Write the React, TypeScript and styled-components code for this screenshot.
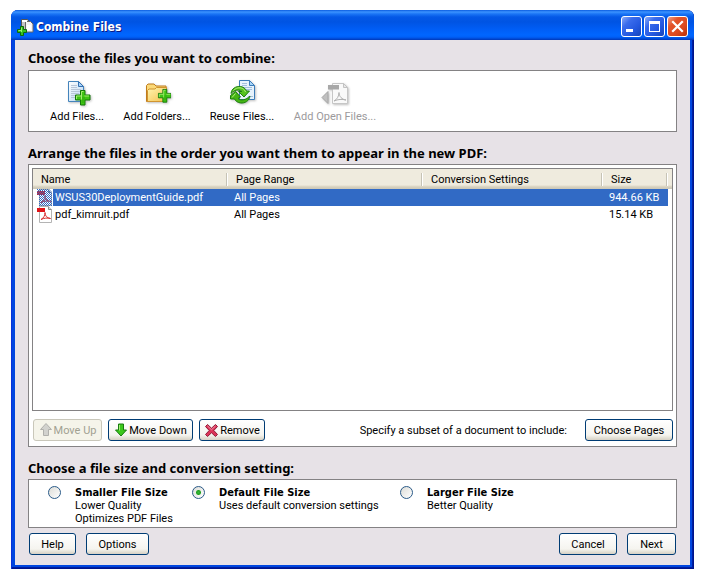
import React, { useState } from 'react';
import styled, { createGlobalStyle } from 'styled-components';

const UI_FONT = 'Roboto, "Liberation Sans", sans-serif';
const BOLD_FONT = '"DejaVu Sans Condensed", "DejaVu Sans", sans-serif';
const HEADING_FONT = '"Noto Sans", "Open Sans", sans-serif';

const GlobalStyle = createGlobalStyle`
  * { box-sizing: border-box; }
  body {
    margin: 0;
    background: #fff;
    color: #000;
    font: 11px/13px ${UI_FONT};
  }
  button, input { font: inherit; color: inherit; }
`;

const Page = styled.div`
  display: flex;
  min-height: 100vh;
  padding: 10px 11px 8px;
`;

const Window = styled.main`
  flex: 1;
  min-width: 0;
  display: flex;
  flex-direction: column;
  border-radius: 7px 7px 0 0;
  background: #0046e0;
  box-shadow: inset 1px 0 #0831d9, inset -1px -1px #00138c, inset -2px -2px #001ea0;
  overflow: hidden;
`;

const TitleBar = styled.header`
  height: 30px;
  flex: none;
  display: flex;
  align-items: center;
  gap: 2px;
  padding: 3px 6px 0 6px;
  background: linear-gradient(
    #0a5ce0 0, #3c93ff 2px, #1a74f5 4px, #0458e6 7px, #0054e3 12px,
    #005df5 19px, #0066ff 25px, #0060f8 27px, #0046d0 29px, #0036b4 30px
  );
`;

const Title = styled.h1`
  flex: 1;
  margin: 0;
  font: bold 12px/16px ${BOLD_FONT};
  color: #fff;
  text-shadow: 1px 1px #0a1883;
`;

const CaptionButton = styled.button<{ $danger?: boolean }>`
  width: 21px;
  height: 21px;
  padding: 0;
  display: grid;
  place-items: center;
  border: 1px solid #fff;
  border-radius: 3px;
  background: ${(p) =>
    p.$danger
      ? 'linear-gradient(135deg, #f0a088 0, #e3532a 30%, #dc4a20 65%, #b83008 100%)'
      : 'linear-gradient(135deg, #8aaaf8 0, #3a6cec 30%, #2458e0 65%, #1644b8 100%)'};
`;

const Content = styled.div`
  flex: 1;
  display: flex;
  flex-direction: column;
  margin: 0 4px 4px;
  padding: 9px 13px 10px;
  background: #e7e2e7;
`;

const Heading = styled.h2`
  margin: 0;
  font: bold 13px/18px ${HEADING_FONT};
`;

const Panel = styled.section`
  border: 1px solid #848284;
  background: #fff;
`;

const Toolbar = styled(Panel)`
  height: 62px;
  margin: 3px 0 12px;
  padding: 8px 12px 0 11px;
  display: flex;
  align-items: flex-start;
`;

const ToolButton = styled.button<{ $width: number }>`
  width: ${(p) => p.$width}px;
  padding: 0;
  display: flex;
  flex-direction: column;
  align-items: center;
  gap: 3px;
  border: 0;
  background: none;
  white-space: nowrap;
  svg { filter: drop-shadow(1px 1px 1px rgb(0 0 0 / 25%)); }
  &:disabled { color: #9c9a9c; }
`;

const FilePanel = styled(Panel)`
  flex: 1;
  display: flex;
  flex-direction: column;
  margin: 2px 0 12px;
  padding: 3px 3px 5px;
`;

const FileList = styled.div`
  flex: 1;
  border: 1px solid #848284;
`;

const Table = styled.table`
  width: 100%;
  table-layout: fixed;
  border-collapse: separate;
  border-spacing: 0;
`;

const Col = styled.col<{ $width?: string }>`
  width: ${(p) => p.$width ?? 'auto'};
`;

const HeaderCell = styled.th`
  height: 20px;
  padding: 0 0 0 8px;
  font-weight: normal;
  text-align: left;
  background:
    linear-gradient(90deg, #c6c3b5 1px, #fff 1px) right 4px / 2px 13px no-repeat,
    linear-gradient(#efebde 16px, #e2dccb 17px, #d6d0be 18px, #cbc7b8 20px);
  &:last-child { background: linear-gradient(#efebde 16px, #e2dccb 17px, #d6d0be 18px, #cbc7b8 20px); }
`;

const Row = styled.tr<{ $selected: boolean }>`
  color: ${(p) => (p.$selected ? '#fff' : '#000')};
  --row: ${(p) => (p.$selected ? '#316ac5' : '#fff')};
`;

const Cell = styled.td`
  height: 17px;
  padding: 0 0 0 6px;
  background: var(--row);
  white-space: nowrap;
`;

const NameCell = styled(Cell)`
  padding: 0 0 0 4px;
  background: #fff;
`;

const FileName = styled.div`
  display: flex;
  height: 17px;
`;

const FileLabel = styled.span`
  flex: 1;
  padding: 2px;
  background: var(--row);
`;

const EndCell = styled.td`
  padding: 0;
`;

const ListActions = styled.div`
  display: flex;
  align-items: center;
  gap: 6px;
  padding: 8px 0 0 1px;
`;

const Button = styled.button<{ $width: number }>`
  width: ${(p) => p.$width}px;
  height: 22px;
  padding: 0;
  display: flex;
  align-items: center;
  justify-content: center;
  gap: 1px;
  border: 1px solid #003c74;
  border-radius: 3px;
  background: linear-gradient(#fff, #f5f4ef 75%, #e2dfd4 90%, #d6d0c5);
  white-space: nowrap;
  &:disabled {
    border-color: #c9c7ba;
    background: #f5f4ea;
    color: #a1a192;
  }
`;

const SubsetHint = styled.span`
  margin-left: auto;
  margin-right: 12px;
`;

const SizeOptions = styled(Panel)`
  min-height: 49px;
  margin: 2px 0 5px;
  padding: 6px 12px 2px 19px;
  display: flex;
`;

const SizeOption = styled.label<{ $width?: number }>`
  display: flex;
  gap: 14px;
  width: ${(p) => (p.$width ? `${p.$width}px` : 'auto')};
  white-space: nowrap;
`;

const Radio = styled.input`
  appearance: none;
  flex: none;
  width: 13px;
  height: 13px;
  margin: 0;
  border: 1px solid #2a5a88;
  border-radius: 50%;
  background: linear-gradient(135deg, #dcdcd7, #fff);
  &:checked {
    background:
      radial-gradient(circle, #38b838 0, #21a121 2px, transparent 3px),
      linear-gradient(135deg, #dcdcd7, #fff);
  }
`;

const OptionText = styled.span`
  display: flex;
  flex-direction: column;
`;

const OptionTitle = styled.strong`
  font: bold 11px/13px ${BOLD_FONT};
`;

const Footer = styled.footer`
  display: flex;
  gap: 10px;
  padding: 0 1px;
`;

const Spacer = styled.span`
  flex: 1;
`;

const Plus = ({ x, y, s = 1 }: { x: number; y: number; s?: number }) => (
  <g transform={`translate(${x} ${y}) scale(${s})`}>
    <path d="M5.500.5h4.500v4.500h5v5h-5v5H5.500v-5h-5V5h5z" fill="#3fc414" stroke="#14780a" />
    <path d="M6.500 9.500V1.500h2M1.500 9V6h5M9.500 6H14" stroke="#a4ec70" fill="none" />
    <path d="M7 7h3v6H7z" fill="#2ca808" opacity=".5" />
  </g>
);

const AddFilesIcon = () => (
  <svg width="28" height="28" viewBox="0 0 28 28" aria-hidden="true">
    <defs>
      <linearGradient id="sheet" x1="0" y1="0" x2="1" y2="1">
        <stop offset="0" stopColor="#fff" />
        <stop offset="1" stopColor="#b4d6f2" />
      </linearGradient>
    </defs>
    <path d="M5.500 2.500h10l5 5v15h-15z" fill="url(#sheet)" stroke="#4484bc" />
    <path d="M15.500 2.500v5h5z" fill="#a8d4fa" stroke="#3470b0" />
    <path d="M8 6.500h6M8 8.500h6M8 10.500h10M8 12.500h10M8 14.500h8M8 16.500h6M8 18.500h6" stroke="#b8c6d8" />
    <Plus x={12} y={11} />
  </svg>
);

const AddFoldersIcon = () => (
  <svg width="28" height="28" viewBox="0 0 28 28" aria-hidden="true">
    <defs>
      <linearGradient id="folder" x1="0" y1="0" x2="1" y2="1">
        <stop offset="0" stopColor="#fff6b0" />
        <stop offset="1" stopColor="#f4c050" />
      </linearGradient>
    </defs>
    <path d="M3.500 22.500v-16l1.500-1.500h6l2 2h10v15.500z" fill="#fbd978" stroke="#c07c1c" />
    <path d="M4.500 22.500v-11l1.500-1.500h6l1.500-1.500h10v14z" fill="url(#folder)" stroke="#d09430" />
    <Plus x={15} y={10} s={0.88} />
  </svg>
);

const ReuseIcon = () => (
  <svg width="28" height="28" viewBox="0 0 28 28" aria-hidden="true">
    <path d="M11.500 1.500h10l5 5v14h-15z" fill="#e6f2fc" stroke="#3c7cb8" />
    <path d="M21.500 1.500v5h5z" fill="#a8d6fa" stroke="#3c7cb8" />
    <path d="M14 4.500h5M14 6.500h5M14 8.500h10M14 10.500h10M20 17.500h5" stroke="#a4c0dc" />
    <path
      d="M3 14.500C3.500 9.500 8 7 12.500 7.500c3 .4 5 2.200 6 4.500h3l-5.500 6-5.500-5.500h3.300c-2.800-2.600-7.500-1.500-10.800 2z"
      fill="#56c21e" stroke="#1c7c10" strokeLinejoin="round"
    />
    <path
      d="M22 17c-.8 5-5 7.500-9.500 7-3-.4-5-2-6-4H2.500v-3.500l5-4 5 5.500-2.500 1.500c3 2.600 8 1.500 12-2.500z"
      fill="#44b414" stroke="#1c7c10" strokeLinejoin="round"
    />
    <path d="M5.500 11.500c2-2.500 6-3.500 9-2 1.500.8 2.500 2 3 3.500M4 18.500l3.500-4" stroke="#b4f080" fill="none" />
  </svg>
);

const OpenFilesIcon = () => (
  <svg width="28" height="28" viewBox="0 0 28 28" aria-hidden="true">
    <path d="M11.500 4.500h11l4 4v16h-15z" fill="#f9f9f9" stroke="#c6c6c6" />
    <path d="M22.500 4.500v4h4z" fill="#e8e8e8" stroke="#c2c2c2" />
    <path d="M7 6h11v4.500H7z" fill="#a8a8a8" />
    <path d="M1 18.500l6-6v12z" fill="#c0c0c0" stroke="#a6a6a6" />
    <path d="M13 22c3-1.500 5-5 5-8.500 0 4 3 7 7 7.500-4-1-8-.8-12 1z" fill="none" stroke="#b0b0b0" />
  </svg>
);

const AppIcon = () => (
  <svg width="17" height="18" viewBox="0 0 17 18" aria-hidden="true">
    <path d="M4.500 1.500h6l1.500 1.500v9h-7.500z" fill="#c4c4c4" stroke="#555" />
    <path d="M8.500 3.500h5l2.500 2.500v8h-7.500z" fill="#f4f4f4" stroke="#666" />
    <path d="M5 2h5v2H5zM10 7h4v5h-4z" fill="#fff" />
    <path d="M3.500 8.500h3v3h3v3h-3v3h-3v-3h-3v-3h3z" fill="#35c41c" stroke="#0c6a0c" />
    <path d="M4.500 14V9.500M1.500 12.500h3" stroke="#98ee70" />
  </svg>
);

const PdfIcon = ({ selected }: { selected: boolean }) => (
  <svg width="16" height="17" viewBox="0 0 16 17" aria-hidden="true">
    <defs>
      <pattern id="dither" width="2" height="2" patternUnits="userSpaceOnUse">
        <path d="M0 0h1v1H0zM1 1h1v1H1z" fill="#316ac5" shapeRendering="crispEdges" />
      </pattern>
    </defs>
    <path d="M2.500 .5h9l3 3v13h-12z" fill="#fff" stroke="#b4b4b4" />
    <path d="M11.500 .5v3h3" fill="#ddd" stroke="#8c8c8c" />
    <path d="M0 2h8v4H0z" fill="#e01418" />
    <path d="M4 13.500c3-1.500 4-4.500 4-7 0 3.500 2 5.500 5.500 6-3-.8-6.500-.5-9.500 1z" fill="none" stroke="#d82c2c" />
    {selected && <path d="M0 0h12l3 3v14H2V6H0z" fill="url(#dither)" />}
  </svg>
);

const UpIcon = () => (
  <svg width="14" height="16" viewBox="0 0 14 16" aria-hidden="true">
    <path d="M7 1.500l5.500 6h-3v6h-5v-6h-3z" fill="#d2d2ce" stroke="#b0b0ac" strokeLinejoin="round" />
  </svg>
);

const DownIcon = () => (
  <svg width="14" height="16" viewBox="0 0 14 16" aria-hidden="true">
    <path d="M7 14l5.500-6h-3V2h-5v6h-3z" fill="#3cc81c" stroke="#187c10" strokeLinejoin="round" />
    <path d="M5.500 3v5.500" stroke="#a0f070" />
  </svg>
);

const RemoveIcon = () => (
  <svg width="15" height="15" viewBox="0 0 15 15" aria-hidden="true">
    <path
      d="M3.500 1.500l4 3.700 4-3.700 2 2-3.700 4 3.700 4-2 2-4-3.700-4 3.700-2-2 3.700-4-3.700-4z"
      fill="#dc3458" stroke="#901c38" strokeLinejoin="round"
    />
    <path d="M3.500 3l4 3.700 4-3.700" stroke="#f58ca4" fill="none" />
  </svg>
);

const MinimizeGlyph = () => (
  <svg width="17" height="17" viewBox="0 0 17 17" aria-hidden="true">
    <path d="M3 11h7v3H3z" fill="#fff" />
  </svg>
);

const MaximizeGlyph = () => (
  <svg width="17" height="17" viewBox="0 0 17 17" aria-hidden="true">
    <path d="M3 3h11v11H3zM4 6v7h9V6z" fill="#fff" fillRule="evenodd" />
  </svg>
);

const CloseGlyph = () => (
  <svg width="17" height="17" viewBox="0 0 17 17" aria-hidden="true">
    <path d="M4 4l9 9M13 4l-9 9" stroke="#fff" strokeWidth="2.200" strokeLinecap="square" />
  </svg>
);

const tools = [
  { label: 'Add Files...', width: 74, icon: <AddFilesIcon /> },
  { label: 'Add Folders...', width: 86, icon: <AddFoldersIcon /> },
  { label: 'Reuse Files...', width: 84, icon: <ReuseIcon /> },
  { label: 'Add Open Files...', width: 102, icon: <OpenFilesIcon />, disabled: true },
];

const files = [
  { name: 'WSUS30DeploymentGuide.pdf', pages: 'All Pages', size: '944.66 KB' },
  { name: 'pdf_kimruit.pdf', pages: 'All Pages', size: '15.14 KB' },
];

const sizes = [
  { id: 'smaller', title: 'Smaller File Size', lines: ['Lower Quality', 'Optimizes PDF Files'], width: 144 },
  { id: 'default', title: 'Default File Size', lines: ['Uses default conversion settings'], width: 208 },
  { id: 'larger', title: 'Larger File Size', lines: ['Better Quality'] },
];

export default function App() {
  const [selected, setSelected] = useState(0);
  const [size, setSize] = useState('default');

  return (
    <Page>
      <GlobalStyle />
      <Window>
        <TitleBar>
          <AppIcon />
          <Title>Combine Files</Title>
          <CaptionButton aria-label="Minimize"><MinimizeGlyph /></CaptionButton>
          <CaptionButton aria-label="Maximize"><MaximizeGlyph /></CaptionButton>
          <CaptionButton aria-label="Close" $danger><CloseGlyph /></CaptionButton>
        </TitleBar>
        <Content>
          <Heading>Choose the files you want to combine:</Heading>
          <Toolbar>
            {tools.map((t) => (
              <ToolButton key={t.label} $width={t.width} disabled={t.disabled}>
                {t.icon}
                {t.label}
              </ToolButton>
            ))}
          </Toolbar>

          <Heading>Arrange the files in the order you want them to appear in the new PDF:</Heading>
          <FilePanel>
            <FileList>
              <Table>
                <colgroup>
                  <Col $width="195px" />
                  <Col $width="195px" />
                  <Col />
                  <Col $width="65px" />
                  <Col $width="4px" />
                </colgroup>
                <thead>
                  <tr>
                    <HeaderCell>Name</HeaderCell>
                    <HeaderCell>Page Range</HeaderCell>
                    <HeaderCell>Conversion Settings</HeaderCell>
                    <HeaderCell>Size</HeaderCell>
                    <HeaderCell as="td" />
                  </tr>
                </thead>
                <tbody>
                  {files.map((f, i) => (
                    <Row key={f.name} $selected={i === selected} onClick={() => setSelected(i)}>
                      <NameCell>
                        <FileName>
                          <PdfIcon selected={i === selected} />
                          <FileLabel>{f.name}</FileLabel>
                        </FileName>
                      </NameCell>
                      <Cell>{f.pages}</Cell>
                      <Cell />
                      <Cell>{f.size}</Cell>
                      <EndCell />
                    </Row>
                  ))}
                </tbody>
              </Table>
            </FileList>
            <ListActions>
              <Button $width={69} disabled><UpIcon />Move Up</Button>
              <Button $width={85}><DownIcon />Move Down</Button>
              <Button $width={66}><RemoveIcon />Remove</Button>
              <SubsetHint>Specify a subset of a document to include:</SubsetHint>
              <Button $width={88}>Choose Pages</Button>
            </ListActions>
          </FilePanel>

          <Heading>Choose a file size and conversion setting:</Heading>
          <SizeOptions>
            {sizes.map((s) => (
              <SizeOption key={s.id} $width={s.width}>
                <Radio type="radio" name="size" checked={size === s.id} onChange={() => setSize(s.id)} />
                <OptionText>
                  <OptionTitle>{s.title}</OptionTitle>
                  {s.lines.map((line) => <span key={line}>{line}</span>)}
                </OptionText>
              </SizeOption>
            ))}
          </SizeOptions>

          <Footer>
            <Button $width={47}>Help</Button>
            <Button $width={63}>Options</Button>
            <Spacer />
            <Button $width={58}>Cancel</Button>
            <Button $width={49}>Next</Button>
          </Footer>
        </Content>
      </Window>
    </Page>
  );
}
